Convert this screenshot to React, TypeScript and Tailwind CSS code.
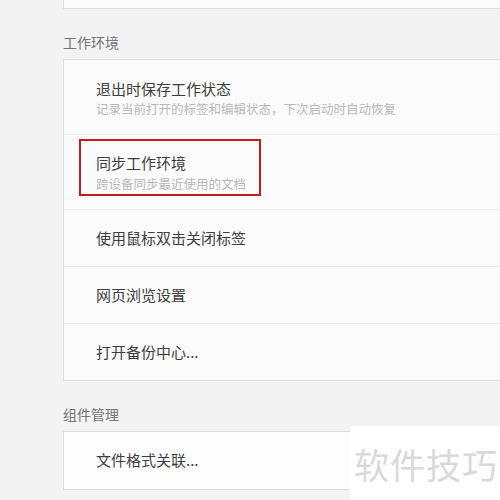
export default function App() {
  const font = { fontFamily: '"Microsoft YaHei", "Noto Sans CJK SC", "Noto Sans", sans-serif' };

  return (
    <div
      className="relative w-[500px] h-[500px] overflow-hidden bg-[#f3f3f3] pl-[63px]"
      style={font}
    >
      {/* previous card, cut off by the top edge */}
      <div className="w-[460px] h-[9px] bg-[#fbfbfb] border-x border-b border-[#dedede]" />

      <div className="mt-[23px] h-[20px] leading-[20px] text-[14px] text-[#747474]">工作环境</div>

      <div className="mt-[7px] w-[460px] bg-[#fbfbfb] border border-[#dedede]">
        <div className="h-[74px] pl-[32px] pt-[19px]">
          <div className="leading-[20px] text-[15px] text-[#3d3d3d]">退出时保存工作状态</div>
          <div className="leading-[20px] text-[12.5px] text-[#b8b8b8]">记录当前打开的标签和编辑状态，下次启动时自动恢复</div>
        </div>
        <div className="relative h-[75px] pl-[32px] pt-[18px] border-t border-[#ebebeb]">
          <div className="leading-[20px] text-[15px] text-[#3d3d3d]">同步工作环境</div>
          <div className="mt-[1px] leading-[20px] text-[12.5px] text-[#b8b8b8]">跨设备同步最近使用的文档</div>
          <div className="absolute left-[15px] top-[4px] w-[182px] h-[57px] border-2 border-[#c41a20]" />
        </div>
        <div className="h-[57px] flex items-center pl-[32px] border-t border-[#ebebeb] text-[15px] text-[#3d3d3d]">
          使用鼠标双击关闭标签
        </div>
        <div className="h-[57px] flex items-center pl-[32px] border-t border-[#ebebeb] text-[15px] text-[#3d3d3d]">
          网页浏览设置
        </div>
        <div className="h-[57px] flex items-center pl-[32px] border-t border-[#ebebeb] text-[15px] text-[#3d3d3d]">
          打开备份中心...
        </div>
      </div>

      <div className="mt-[23px] h-[20px] leading-[20px] text-[14px] text-[#747474]">组件管理</div>

      <div className="mt-[7px] w-[460px] h-[59px] flex items-center pl-[32px] bg-[#fdfdfd] border border-[#dedede] text-[15px] text-[#3d3d3d]">
        文件格式关联...
      </div>

      {/* watermark */}
      <div className="absolute left-[350px] top-[426px] right-0 bottom-0 bg-white flex items-center pl-[4px]">
        <span className="text-[35px] leading-none tracking-[1px] text-[#d9d9d9]">软件技巧</span>
      </div>
    </div>
  );
}
